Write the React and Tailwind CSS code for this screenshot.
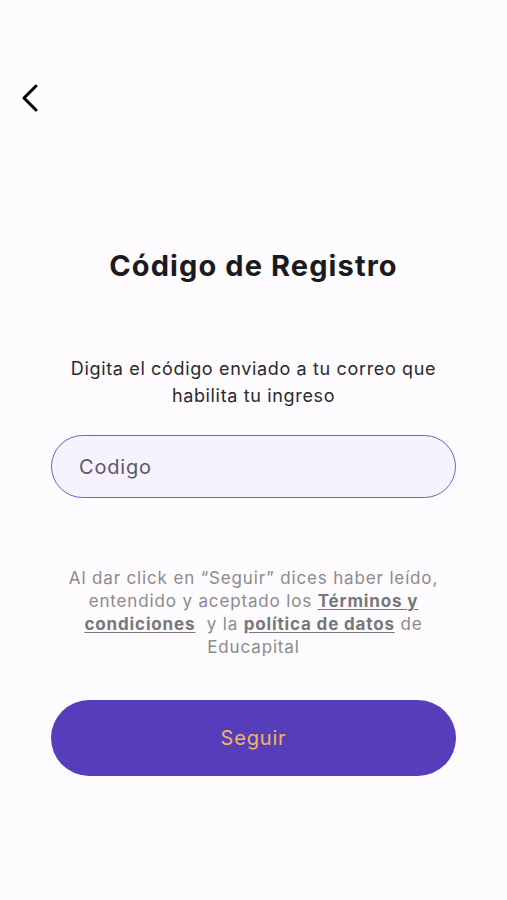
import React from "react";

export default function App() {
  return (
    <div className="min-h-[900px] w-full bg-[#fdfbfe] font-['Inter','Noto_Sans',sans-serif]">
      <div className="h-[78px]" />
      <div className="px-[20px]">
        <button className="flex h-[40px] w-[28px] items-center justify-start text-black">
          <svg width="20" height="30" viewBox="0 0 20 30" fill="none">
            <path d="M16 3 L4 15 L16 27" stroke="currentColor" strokeWidth="3" strokeLinecap="round" strokeLinejoin="round" />
          </svg>
        </button>
      </div>
      <div className="flex flex-col items-center px-[51px]">
        <h1 className="mt-[131px] text-[29px] font-bold leading-[34px] tracking-[1.1px] text-[#1b1b1f]">Código de Registro</h1>
        <p className="mt-[72px] text-center text-[18px] leading-[27px] tracking-[0.65px] text-[#2a2a2e]">
          Digita el código enviado a tu correo que
          <br />
          habilita tu ingreso
        </p>
        <input
          placeholder="Codigo"
          className="mt-[26px] h-[63px] w-full rounded-full border-[1.5px] border-[#6f5fc6] bg-[#f6f3fe] px-[27px] text-[20px] tracking-[0.8px] text-[#1b1b1f] outline-none placeholder:text-[#5d5966]"
        />
        <p className="mt-[69px] text-center text-[17px] leading-[23px] tracking-[0.85px] text-[#8b8a8e]">
          Al dar click en “Seguir” dices haber leído,
          <br />
          entendido y aceptado los{" "}
          <a className="font-bold text-[#777679] underline underline-offset-2">Términos y</a>
          <br />
          <a className="font-bold text-[#777679] underline underline-offset-2">condiciones</a>
          {"\u00a0 "}y la{" "}
          <a className="font-bold text-[#777679] underline underline-offset-2">política de datos</a> de
          <br />
          Educapital
        </p>
        <button className="mt-[41px] h-[76px] w-full rounded-full bg-[#563dbb] text-[20px] tracking-[0.8px] text-[#f1b65c]">
          Seguir
        </button>
      </div>
    </div>
  );
}
